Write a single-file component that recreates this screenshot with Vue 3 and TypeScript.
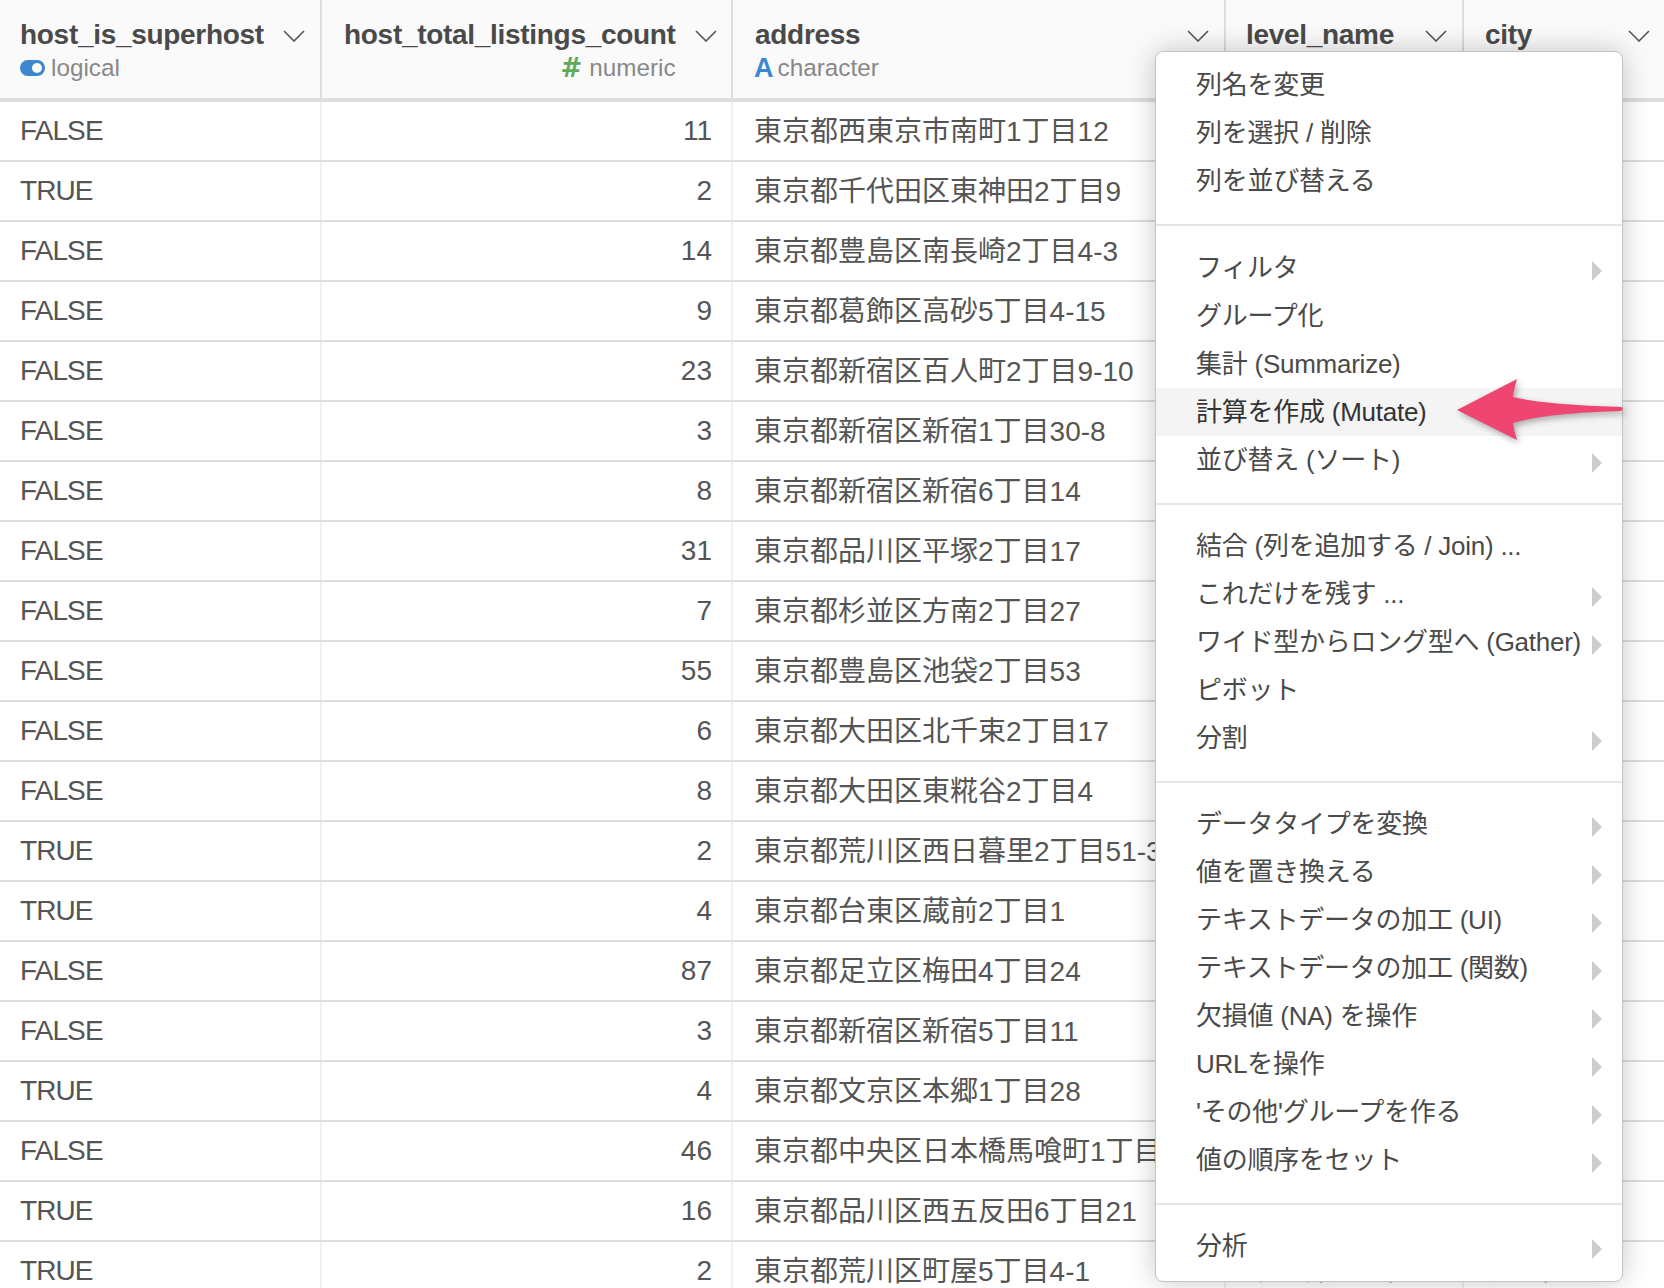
<script setup lang="ts">
interface Row { superhost: string; count: number; address: string }
const raw: [string, number, string][] = [
  ['FALSE', 11, '東京都西東京市南町1丁目12'],
  ['TRUE', 2, '東京都千代田区東神田2丁目9'],
  ['FALSE', 14, '東京都豊島区南長崎2丁目4-3'],
  ['FALSE', 9, '東京都葛飾区高砂5丁目4-15'],
  ['FALSE', 23, '東京都新宿区百人町2丁目9-10'],
  ['FALSE', 3, '東京都新宿区新宿1丁目30-8'],
  ['FALSE', 8, '東京都新宿区新宿6丁目14'],
  ['FALSE', 31, '東京都品川区平塚2丁目17'],
  ['FALSE', 7, '東京都杉並区方南2丁目27'],
  ['FALSE', 55, '東京都豊島区池袋2丁目53'],
  ['FALSE', 6, '東京都大田区北千束2丁目17'],
  ['FALSE', 8, '東京都大田区東糀谷2丁目4'],
  ['TRUE', 2, '東京都荒川区西日暮里2丁目51-3'],
  ['TRUE', 4, '東京都台東区蔵前2丁目1'],
  ['FALSE', 87, '東京都足立区梅田4丁目24'],
  ['FALSE', 3, '東京都新宿区新宿5丁目11'],
  ['TRUE', 4, '東京都文京区本郷1丁目28'],
  ['FALSE', 46, '東京都中央区日本橋馬喰町1丁目13'],
  ['TRUE', 16, '東京都品川区西五反田6丁目21'],
  ['TRUE', 2, '東京都荒川区町屋5丁目4-1'],
]
const rows: (Row & { level: string; city: string })[] = raw.map(([superhost, count, address], i) => {
  // Only the last row's level and city peek out from under the menu.
  const city = i === raw.length - 1 ? (address.match(/^東京都(.+?[区市])/) || ['', ''])[1] : ''
  return { superhost, count, address, city, level: city ? `東京都${city}` : '' }
})
const sections: { label: string; sub?: boolean; active?: boolean }[][] = [
  [{ label: '列名を変更' }, { label: '列を選択 / 削除' }, { label: '列を並び替える' }],
  [
    { label: 'フィルタ', sub: true },
    { label: 'グループ化' },
    { label: '集計 (Summarize)' },
    { label: '計算を作成 (Mutate)', active: true },
    { label: '並び替え (ソート)', sub: true },
  ],
  [
    { label: '結合 (列を追加する / Join) ...' },
    { label: 'これだけを残す ...', sub: true },
    { label: 'ワイド型からロング型へ (Gather)', sub: true },
    { label: 'ピボット' },
    { label: '分割', sub: true },
  ],
  [
    { label: 'データタイプを変換', sub: true },
    { label: '値を置き換える', sub: true },
    { label: 'テキストデータの加工 (UI)', sub: true },
    { label: 'テキストデータの加工 (関数)', sub: true },
    { label: '欠損値 (NA) を操作', sub: true },
    { label: 'URLを操作', sub: true },
    { label: "'その他'グループを作る", sub: true },
    { label: '値の順序をセット', sub: true },
  ],
  [{ label: '分析', sub: true }],
]
</script>

<template>
  <div class="page">
    <div class="grid head">
      <div class="hcell first">
        <div class="titles">
          <div class="name">host_is_superhost</div>
          <div class="type"><span class="toggle"></span>logical</div>
        </div>
        <svg class="chev" viewBox="0 0 22 12"><path d="M1 1l10 10L21 1" /></svg>
      </div>
      <div class="hcell second">
        <div class="titles end">
          <div class="name">host_total_listings_count</div>
          <div class="type"><span class="hash">#</span>numeric</div>
        </div>
        <svg class="chev" viewBox="0 0 22 12"><path d="M1 1l10 10L21 1" /></svg>
      </div>
      <div class="hcell third">
        <div class="titles">
          <div class="name">address</div>
          <div class="type"><span class="letter">A</span>character</div>
        </div>
        <svg class="chev" viewBox="0 0 22 12"><path d="M1 1l10 10L21 1" /></svg>
      </div>
      <div class="hcell fourth">
        <div class="titles">
          <div class="name">level_name</div>
        </div>
        <svg class="chev" viewBox="0 0 22 12"><path d="M1 1l10 10L21 1" /></svg>
      </div>
      <div class="hcell fifth">
        <div class="titles">
          <div class="name">city</div>
        </div>
        <svg class="chev" viewBox="0 0 22 12"><path d="M1 1l10 10L21 1" /></svg>
      </div>
    </div>

    <div v-for="(r, i) in rows" :key="i" class="grid row">
      <div class="cell first bool">{{ r.superhost }}</div>
      <div class="cell num">{{ r.count }}</div>
      <div class="cell third">{{ r.address }}</div>
      <div class="cell fourth">{{ r.level }}</div>
      <div class="cell fifth">{{ r.city }}</div>
    </div>

    <div class="menu">
      <template v-for="(section, s) in sections" :key="s">
        <div v-if="s > 0" class="divider" :class="{ wide: s === 1 }"></div>
        <div
          v-for="item in section"
          :key="item.label"
          class="item"
          :class="{ active: item.active }"
        >
          <span>{{ item.label }}</span>
          <span v-if="item.sub" class="caret"></span>
        </div>
      </template>
    </div>

    <svg class="arrow" viewBox="0 0 190 80" width="190" height="80">
      <path
        d="M5 40 L65 9 Q62 19 61 27 C 90 34 140 36 169 37 Q173 38 169 41 C 140 42 90 44 61 53 Q62 61 65 70 Z"
      />
    </svg>
  </div>
</template>

<style scoped>
.page {
  position: relative;
  width: 1664px;
  height: 1288px;
  overflow: hidden;
  background: #fff;
  font-family: "Liberation Sans", "Noto Sans CJK JP", sans-serif;
  color: #555;
}
.grid {
  display: grid;
  grid-template-columns: 322px 411px 493px 238px 200px;
}
.head {
  height: 102px;
  box-sizing: border-box;
  background: #fafafa;
  border-bottom: 4px solid #ddd;
}
.hcell {
  display: flex;
  align-items: flex-start;
  box-sizing: border-box;
  padding-top: 18px;
  border-right: 2px solid #ddd;
  min-width: 0;
}
.hcell.first { padding-left: 20px; padding-right: 15px; }
.hcell.second { padding-left: 22px; padding-right: 14px; }
.hcell.third { padding-left: 22px; padding-right: 15px; }
.hcell.fourth { padding-left: 20px; padding-right: 15px; }
.hcell.fifth { padding-left: 21px; padding-right: 14px; border-right: 0; }
.titles {
  display: flex;
  flex-direction: column;
  min-width: 0;
}
.titles.end { align-items: flex-end; }
.name {
  font-size: 28px;
  line-height: 34px;
  font-weight: 700;
  color: #4a4a4a;
  white-space: nowrap;
  letter-spacing: -0.3px;
}
.type {
  display: flex;
  align-items: center;
  margin-top: 1px;
  font-size: 24.3px;
  line-height: 30px;
  color: #888;
  white-space: nowrap;
}
.toggle {
  position: relative;
  width: 25px;
  height: 16px;
  margin-right: 6px;
  border-radius: 8px;
  background: #3b87d0;
}
.toggle::after {
  content: "";
  position: absolute;
  right: 3px;
  top: 3px;
  width: 10px;
  height: 10px;
  border-radius: 50%;
  background: #fafafa;
}
.hash {
  font-family: "DejaVu Sans", sans-serif;
  font-weight: 700;
  font-size: 26px;
  color: #5cab5a;
  margin-right: 7px;
}
.letter {
  font-weight: 700;
  font-size: 27px;
  color: #3b87d0;
  margin-left: -1px;
  margin-right: 4px;
}
.chev {
  flex: none;
  margin-left: auto;
  margin-top: 12px;
  width: 22px;
  height: 12px;
  fill: none;
  stroke: #555;
  stroke-width: 1.6;
}
.row {
  height: 60px;
  box-sizing: border-box;
  border-bottom: 2px solid #ddd;
}
.cell {
  box-sizing: border-box;
  font-size: 28px;
  line-height: 58px;
  white-space: nowrap;
  overflow: hidden;
  border-right: 2px solid #f0f0f0;
  min-width: 0;
}
.cell.first { padding-left: 20px; }
.cell.bool { letter-spacing: -0.9px; }
.cell.num { text-align: right; padding-right: 19px; }
.cell.third { padding-left: 21px; padding-top: 1px; }
.cell.fourth { padding-left: 21px; }
.cell.fifth { padding-left: 22px; border-right: 0; }
.menu {
  position: absolute;
  left: 1155px;
  top: 51px;
  width: 468px;
  height: 1231px;
  box-sizing: border-box;
  padding-top: 9px;
  background: #fff;
  border: 1px solid #c4c4c4;
  border-radius: 8px;
  box-shadow: 0 0 28px rgba(0, 0, 0, 0.22);
}
.item {
  display: flex;
  align-items: center;
  box-sizing: border-box;
  height: 48px;
  padding: 0 20px 6px 40px;
  font-size: 26px;
  letter-spacing: -0.25px;
  color: #4a4a4a;
  white-space: nowrap;
}
.item.active {
  background: #f4f4f4;
  color: #333;
}
.caret {
  margin-left: auto;
  margin-top: 12px;
  border-left: 10px solid #ccc;
  border-top: 10px solid transparent;
  border-bottom: 10px solid transparent;
}
.divider {
  height: 2px;
  margin: 19px 0 17px;
  background: #e6e6e6;
}
.divider.wide {
  margin-bottom: 18px;
}
.arrow {
  position: absolute;
  left: 1452px;
  top: 370px;
  overflow: visible;
  fill: #ee4670;
  filter: drop-shadow(2px 3px 3px rgba(0, 0, 0, 0.3));
}
</style>
